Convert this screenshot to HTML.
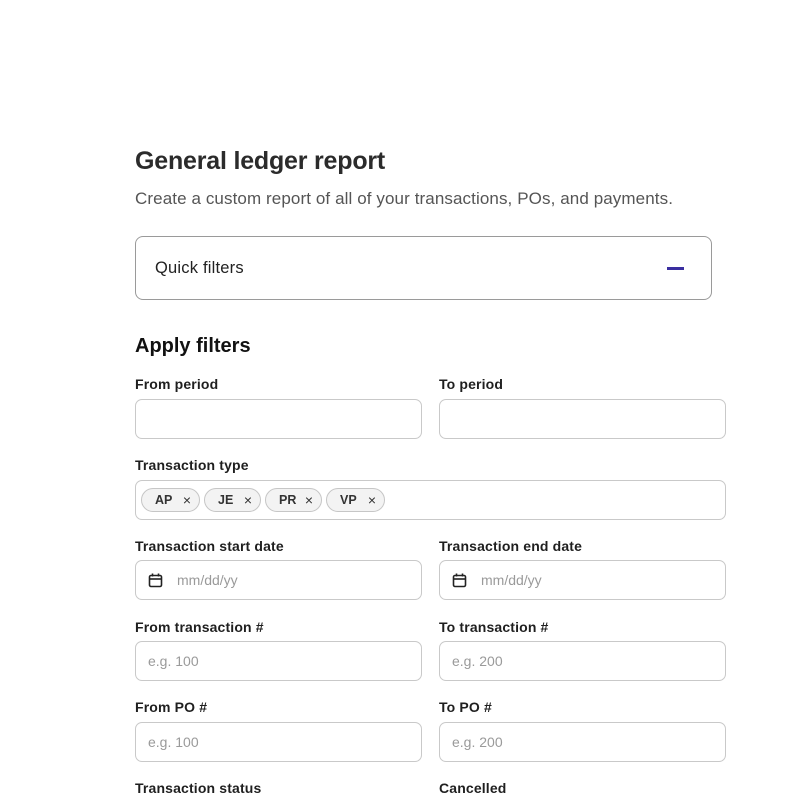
<!DOCTYPE html>
<html><head><style>
*{margin:0;padding:0;box-sizing:border-box}
body{width:800px;height:800px;background:#fff;font-family:"Liberation Sans",sans-serif;position:relative;overflow:hidden;color:#1a1a1a}
.a{position:absolute}
.lbl{position:absolute;font-size:14px;font-weight:bold;color:#1f1f1f;line-height:16px;letter-spacing:0.15px}
.in{position:absolute;height:40px;border:1px solid #c9c9c9;border-radius:7px;background:#fff;font-size:14px;color:#9a9a9a;line-height:38px;padding-left:12px}
.chip{position:absolute;top:488px;height:24px;border:1px solid #c6c6c6;border-radius:12px;background:#f3f3f3;font-size:12.5px;font-weight:bold;color:#333;line-height:22px;padding-left:13px}
.chip span{position:absolute;right:8px;font-weight:normal;font-size:14px}
.cal{position:absolute;left:12px;top:12px}
</style></head><body>
<div class="a" style="left:135px;top:147px;font-size:25px;font-weight:bold;color:#2b2b2b;letter-spacing:-0.2px">General ledger report</div>
<div class="a" style="left:135px;top:189px;font-size:17px;color:#555;letter-spacing:0.1px">Create a custom report of all of your transactions, POs, and payments.</div>
<div class="a" style="left:135px;top:236px;width:577px;height:64px;border:1px solid #9a9a9a;border-radius:8px"></div>
<div class="a" style="left:155px;top:259px;font-size:16.5px;color:#222;letter-spacing:0.2px">Quick filters</div>
<div class="a" style="left:667px;top:267px;width:17px;height:2.5px;background:#3a2ea0"></div>
<div class="a" style="left:135px;top:335px;font-size:20px;font-weight:bold;color:#111">Apply filters</div>

<div class="lbl" style="left:135px;top:376px">From period</div>
<div class="lbl" style="left:439px;top:376px">To period</div>
<div class="in" style="left:135px;top:399px;width:287px"></div>
<div class="in" style="left:439px;top:399px;width:287px"></div>

<div class="lbl" style="left:135px;top:457px">Transaction type</div>
<div class="in" style="left:135px;top:480px;width:591px"></div>
<div class="chip" style="left:141px;width:59px">AP<span>×</span></div>
<div class="chip" style="left:204px;width:57px">JE<span>×</span></div>
<div class="chip" style="left:265px;width:57px">PR<span>×</span></div>
<div class="chip" style="left:326px;width:59px">VP<span>×</span></div>

<div class="lbl" style="left:135px;top:538px">Transaction start date</div>
<div class="lbl" style="left:439px;top:538px">Transaction end date</div>
<div class="in" style="left:135px;top:560px;width:287px;padding-left:41px"><svg class="cal" width="15" height="15" viewBox="0 0 15 15"><rect x="1.5" y="2.5" width="12" height="11" rx="1.5" fill="none" stroke="#222" stroke-width="1.6"/><line x1="1.5" y1="6" x2="13.5" y2="6" stroke="#222" stroke-width="1.6"/><line x1="4.5" y1="0.5" x2="4.5" y2="3.5" stroke="#222" stroke-width="1.6"/><line x1="10.5" y1="0.5" x2="10.5" y2="3.5" stroke="#222" stroke-width="1.6"/></svg>mm/dd/yy</div>
<div class="in" style="left:439px;top:560px;width:287px;padding-left:41px"><svg class="cal" width="15" height="15" viewBox="0 0 15 15"><rect x="1.5" y="2.5" width="12" height="11" rx="1.5" fill="none" stroke="#222" stroke-width="1.6"/><line x1="1.5" y1="6" x2="13.5" y2="6" stroke="#222" stroke-width="1.6"/><line x1="4.5" y1="0.5" x2="4.5" y2="3.5" stroke="#222" stroke-width="1.6"/><line x1="10.5" y1="0.5" x2="10.5" y2="3.5" stroke="#222" stroke-width="1.6"/></svg>mm/dd/yy</div>

<div class="lbl" style="left:135px;top:619px">From transaction #</div>
<div class="lbl" style="left:439px;top:619px">To transaction #</div>
<div class="in" style="left:135px;top:641px;width:287px">e.g. 100</div>
<div class="in" style="left:439px;top:641px;width:287px">e.g. 200</div>

<div class="lbl" style="left:135px;top:699px">From PO #</div>
<div class="lbl" style="left:439px;top:699px">To PO #</div>
<div class="in" style="left:135px;top:722px;width:287px">e.g. 100</div>
<div class="in" style="left:439px;top:722px;width:287px">e.g. 200</div>

<div class="lbl" style="left:135px;top:780px">Transaction status</div>
<div class="lbl" style="left:439px;top:780px">Cancelled</div>
</body></html>
